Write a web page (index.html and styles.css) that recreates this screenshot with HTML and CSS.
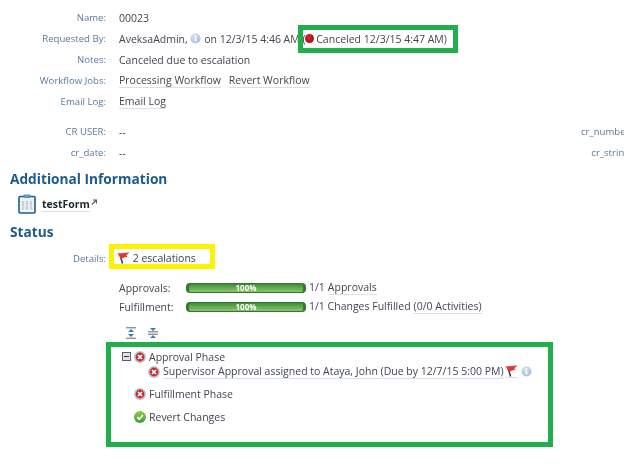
FILE: index.html
```html
<!DOCTYPE html>
<html lang="en">
<head>
  <meta charset="UTF-8">
  <meta name="viewport" content="width=device-width, initial-scale=1.0">
  <title>Change Request 00023</title>
  <link rel="stylesheet" href="styles.css">
</head>
<body>
  <svg class="defs" width="0" height="0">
    <defs>
      <radialGradient id="info-fill" cx="0.4" cy="0.3" r="0.8">
        <stop offset="0" stop-color="#d9e3ef"/>
        <stop offset="1" stop-color="#a3b8d0"/>
      </radialGradient>
      <linearGradient id="ok-fill" x1="0" y1="0" x2="0" y2="1">
        <stop offset="0" stop-color="#8ccb4a"/>
        <stop offset="1" stop-color="#3f9c36"/>
      </linearGradient>
      <symbol id="i-info" viewBox="0 0 12 12">
        <circle cx="6" cy="6" r="5.5" fill="url(#info-fill)"/>
        <rect x="5.2" y="2.4" width="1.7" height="1.6" fill="#fff"/>
        <rect x="5.2" y="4.9" width="1.7" height="4.5" fill="#fff"/>
      </symbol>
      <symbol id="i-flag" viewBox="0 0 14 13">
        <path d="M6 12.5 L3 2.5" stroke="#24345e" stroke-width="1.6" fill="none"/>
        <path d="M.5 1 C4 2.5 8 0 13.5 .5 L10 3.5 L11.5 5.5 C8.5 5.5 6.5 6 4.5 8 Z" fill="#e2382d"/>
      </symbol>
      <symbol id="i-cancel" viewBox="0 0 12 12">
        <circle cx="6" cy="6" r="6" fill="#c4c4c4"/>
        <circle cx="6" cy="6" r="4.4" fill="#c22f38"/>
        <path d="M4 4 L8 8 M8 4 L4 8" stroke="#fff" stroke-width="1.7"/>
      </symbol>
      <symbol id="i-ok" viewBox="0 0 12 12">
        <circle cx="6" cy="6" r="6" fill="url(#ok-fill)"/>
        <path d="M3.2 6.2 L5.2 8.2 L8.9 4.2" stroke="#fff" stroke-width="1.7" fill="none"/>
      </symbol>
    </defs>
  </svg>

  <div class="page">
    <section class="details">
      <div class="row"><span class="label">Name:</span><span>00023</span></div>
      <div class="row">
        <span class="label">Requested By:</span>
        <span class="inline">AveksaAdmin, <svg class="ico"><use href="#i-info"/></svg> on 12/3/15 4:46 AM (<i class="dot"></i> Canceled 12/3/15 4:47 AM)</span>
      </div>
      <div class="row"><span class="label">Notes:</span><span>Canceled due to escalation</span></div>
      <div class="row">
        <span class="label">Workflow Jobs:</span>
        <span class="links"><a href="#">Processing Workflow</a><a href="#">Revert Workflow</a></span>
      </div>
      <div class="row"><span class="label">Email Log:</span><span class="links"><a href="#">Email Log</a></span></div>
    </section>

    <section class="custom">
      <div class="row"><span class="label">CR USER:</span><span>--</span><span class="label far">cr_number:</span></div>
      <div class="row"><span class="label">cr_date:</span><span>--</span><span class="label far">cr_string:</span></div>
    </section>

    <h2 class="first">Additional Information</h2>
    <div class="form-link">
      <svg class="clipboard" width="18" height="20" viewBox="0 0 18 20">
        <rect x="1" y="2.5" width="16" height="16.5" rx="1" fill="#eef3f8" stroke="#1d5c8c" stroke-width="1.6"/>
        <rect x="5.5" y="0.5" width="7" height="3.5" fill="#5b9ac8"/>
        <path d="M5 7 V16 M9 7 V16 M13 7 V16" stroke="#b9c4cf" stroke-width="2.4" stroke-dasharray="1.4 .7"/>
      </svg>
      <a href="#">testForm</a>
      <svg class="ext" width="6" height="6" viewBox="0 0 6 6"><path d="M1 5.5 L5 1.5 M2 1 H5.5 V4.5" stroke="#555" stroke-width="1.1" fill="none"/></svg>
    </div>

    <h2>Status</h2>
    <div class="row status-row">
      <span class="label">Details:</span>
      <span class="inline escalations"><svg class="ico flag"><use href="#i-flag"/></svg> 2 escalations</span>
    </div>

    <div class="progress">
      <span class="p-label">Approvals:</span>
      <div class="bar">100%</div>
      <span class="links tight"><span>1/1</span> <a href="#">Approvals</a></span>
      <span class="p-label">Fulfillment:</span>
      <div class="bar">100%</div>
      <span class="links tight"><span>1/1 Changes Fulfilled</span> <a href="#">(0/0 Activities)</a></span>
    </div>

    <div class="tools">
      <svg width="12" height="12" viewBox="0 0 12 12">
        <path d="M1 .8 H11 M1 11.2 H11" stroke="#667" stroke-width="1"/>
        <path d="M6 2 L9 5 H3 Z M6 10 L3 7 H9 Z" fill="#2f7fc1"/>
      </svg>
      <svg width="12" height="12" viewBox="0 0 12 12">
        <path d="M1 4.8 H11 M1 7.2 H11" stroke="#667" stroke-width="1"/>
        <path d="M6 4 L3 1 H9 Z M6 8 L9 11 H3 Z" fill="#2f7fc1"/>
      </svg>
    </div>

    <ul class="tree">
      <li class="phase">
        <svg class="toggle" width="9" height="9" viewBox="0 0 9 9"><rect x=".5" y=".5" width="8" height="8" fill="#dfe3e8" stroke="#56606c"/><path d="M2 4.5 H7" stroke="#333"/></svg>
        <svg class="ico state"><use href="#i-cancel"/></svg>
        Approval Phase
      </li>
      <li class="task">
        <svg class="ico state"><use href="#i-cancel"/></svg>
        <a href="#">Supervisor Approval assigned to Ataya, John (Due by 12/7/15 5:00 PM)</a>
        <a href="#" class="flag-link"><svg class="ico flag"><use href="#i-flag"/></svg></a>
        <svg class="ico"><use href="#i-info"/></svg>
      </li>
      <li class="phase spaced"><svg class="ico state"><use href="#i-cancel"/></svg> Fulfillment Phase</li>
      <li class="phase spaced"><svg class="ico state"><use href="#i-ok"/></svg> Revert Changes</li>
    </ul>
  </div>

  <div class="callout green top"></div>
  <div class="callout yellow"></div>
  <div class="callout green bottom"></div>
</body>
</html>
```

FILE: styles.css
```css
html, body {
  margin: 0;
  height: 467px;
  overflow: hidden;
  background: #fff;
}
body {
  position: relative;
  font-family: 'Open Sans', sans-serif;
  font-size: 10.5px;
  color: #3f4650;
}
.defs {
  position: absolute;
}
/* the source picture is a soft upscale */
.page {
  width: 640px;
  padding-top: 7px;
  filter: blur(0.3px);
}
a {
  color: inherit;
  text-decoration: none;
  border-bottom: 1px solid #dcdfe3;
}
.row {
  display: flex;
  align-items: center;
  height: 21px;
  gap: 13px;
  white-space: nowrap;
}
.label {
  width: 106px;
  flex: none;
  text-align: right;
  font-size: 9.6px;
  color: #5c7a9c;
}
.inline {
  display: flex;
  align-items: center;
  white-space: pre;
}
.ico {
  width: 11px;
  height: 11px;
  flex: none;
}
.dot {
  width: 9px;
  height: 9px;
  margin-left: -1px;
  border-radius: 50%;
  background: radial-gradient(circle at 40% 35%, #d8262b, #8f0a0d);
}
.links {
  display: flex;
  gap: 8px;
}
.links.tight {
  gap: 3px;
  padding-left: 3px;
}
.custom {
  margin-top: 9px;
}
.custom .far {
  margin-left: auto;
  width: 120px;
  margin-right: 8px;
}
h2 {
  margin: 0 0 0 10px;
  font-size: 13.7px;
  line-height: 20px;
  font-weight: 700;
  color: #1c5a8e;
}
h2.first {
  margin-top: 6px;
}
.form-link {
  display: flex;
  align-items: center;
  height: 22px;
  margin: 4px 0 7px 18px;
  font-weight: 700;
  color: #1f2730;
}
.clipboard {
  margin-right: 6px;
}
.ext {
  margin: -4px 0 0 1px;
}
.status-row {
  margin-top: 4px;
  height: 24px;
}
.flag {
  width: 13px;
  height: 12px;
}
.escalations {
  margin-left: -2px;
}
.progress {
  display: grid;
  grid-template-columns: 67px 120px auto;
  justify-content: start;
  align-items: center;
  grid-auto-rows: 19px;
  margin: 8px 0 0 119px;
  white-space: nowrap;
}
.bar {
  height: 10px;
  border-radius: 4px;
  border: 1px solid #35772f;
  border-left-width: 3px;
  border-right-width: 3px;
  box-sizing: border-box;
  background: linear-gradient(#3f8a39, #5fa94f 45%, #8cc46f);
  color: #fff;
  font-size: 8px;
  font-weight: 700;
  line-height: 8px;
  text-align: center;
}
.tools {
  display: flex;
  gap: 10px;
  height: 12px;
  margin: 11px 0 0 125px;
}
.tree {
  list-style: none;
  margin: 10px 0 0 122px;
  padding: 0;
  white-space: nowrap;
}
.tree li {
  display: flex;
  align-items: center;
  gap: 3px;
  height: 15px;
}
.state {
  width: 12px;
  height: 12px;
}
.tree .task {
  margin-left: 26px;
  margin-top: 1px;
  height: 13px;
}
.tree .spaced {
  margin-left: 12px;
  margin-top: 8px;
  height: 15px;
}
.flag-link {
  display: flex;
  margin-left: -2px;
}
.callout {
  position: absolute;
  box-sizing: border-box;
  border: 5px solid #22ae4d;
}
.callout.top {
  left: 298px;
  top: 25px;
  width: 160px;
  height: 28px;
}
.callout.yellow {
  left: 109px;
  top: 244px;
  width: 106px;
  height: 25px;
  border-color: #fff200;
}
.callout.bottom {
  left: 106px;
  top: 342px;
  width: 447px;
  height: 105px;
}
```
